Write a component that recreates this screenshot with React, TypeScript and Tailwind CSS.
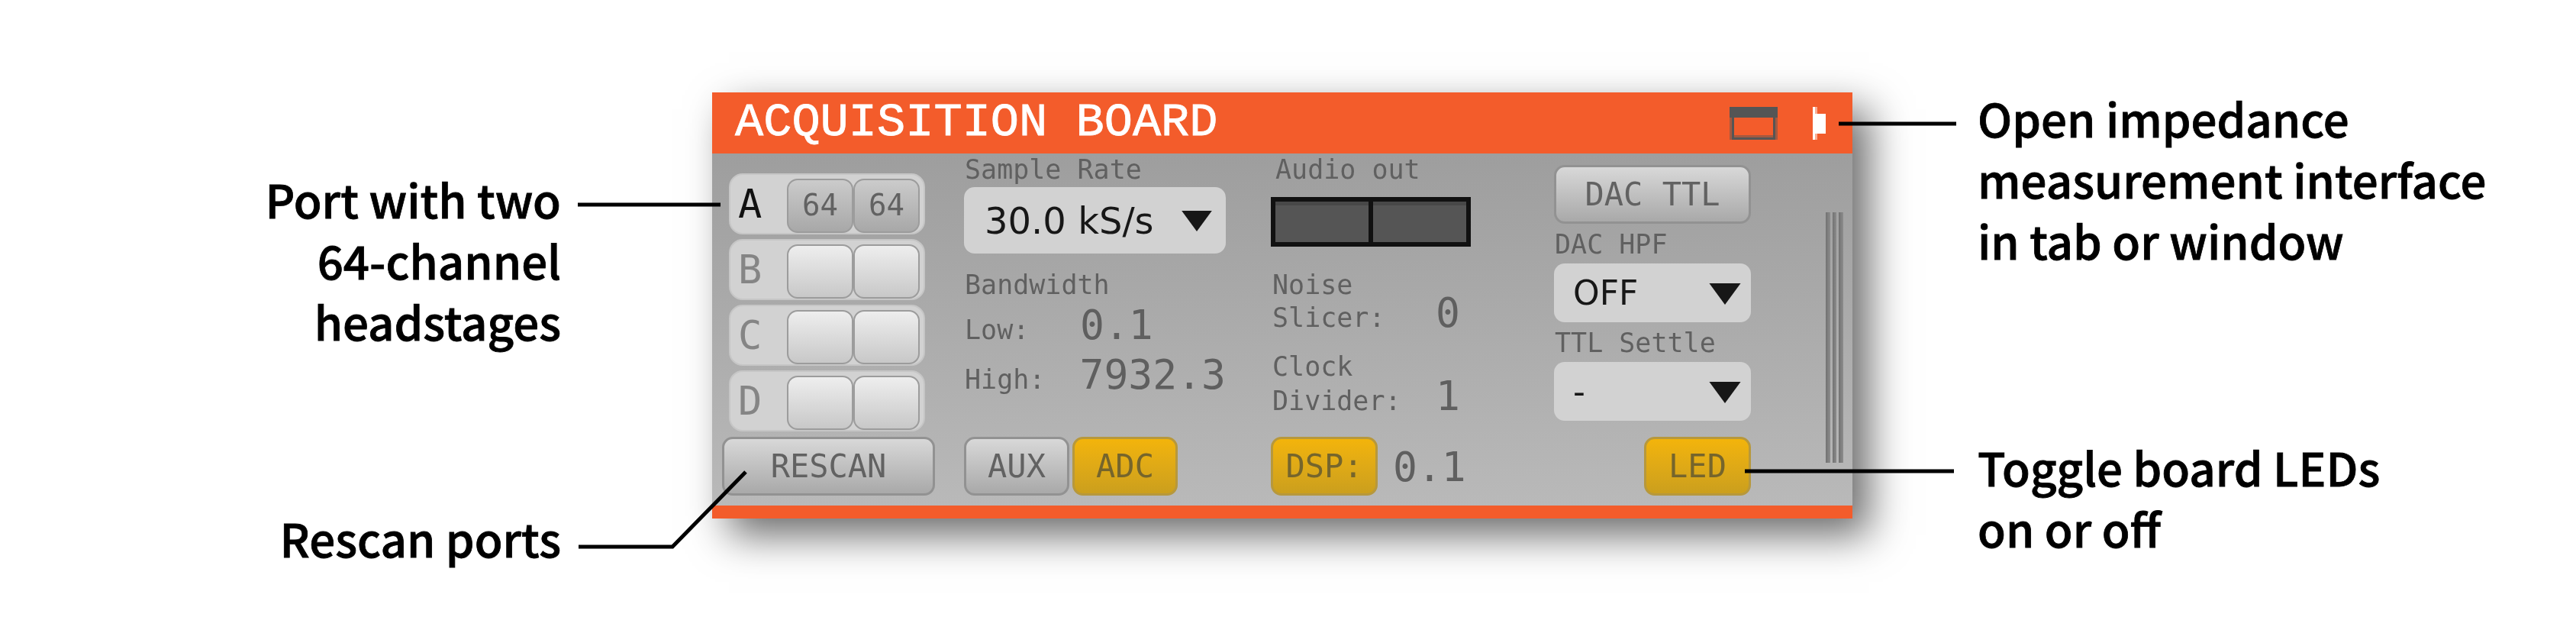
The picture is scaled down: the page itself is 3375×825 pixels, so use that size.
const mono = "font-['DejaVu_Sans_Mono',monospace]";

const Triangle = ({ className }: { className: string }) => (
  <svg viewBox="0 0 44 30" className={className}>
    <polygon points="0,0 44,0 22,30" fill="#171717" />
  </svg>
);

const Label = ({ children, className = "" }: { children: string; className?: string }) => (
  <div className={`${mono} text-[35px] leading-[35px] whitespace-pre text-[#606060] ${className}`}>{children}</div>
);

const Value = ({ children, className = "" }: { children: string; className?: string }) => (
  <span className={`${mono} text-[53px] whitespace-pre text-[#5f5f5f] ${className}`}>{children}</span>
);

const Button = ({ children, on = false, className = "" }: { children: string; on?: boolean; className?: string }) => (
  <div
    className={`${mono} flex items-center justify-center h-[77px] rounded-[14px] border-[3px] text-[42px] whitespace-pre ${
      on
        ? "border-[#b7983c] bg-gradient-to-b from-[#f3b40a] to-[#cb9f1d] text-[#75652c]"
        : "border-[#929292] bg-gradient-to-b from-[#d8d8d8] to-[#a9a9a9] text-[#626262]"
    } ${className}`}
  >
    {children}
  </div>
);

const Dropdown = ({ text, className, arrow }: { text: string; className: string; arrow: string }) => (
  <div className={`flex items-center justify-between rounded-[14px] bg-[#d2d2d2] ${className}`}>
    <span className="font-['DejaVu_Sans',sans-serif] text-[#171717] whitespace-pre">{text}</span>
    <Triangle className={arrow} />
  </div>
);

const HeadstageSlot = ({ text }: { text?: string }) => (
  <div
    className={`${mono} flex items-center justify-center w-[87px] h-[71px] rounded-[14px] border-[2px] border-[#9c9c9c] text-[39px] text-[#626262] ${
      text ? "bg-gradient-to-b from-[#cbcbcb] to-[#a8a8a8]" : "bg-gradient-to-b from-[#eeeeee] to-[#c8c8c8]"
    }`}
  >
    {text}
  </div>
);

const PortRow = ({ name, active = false }: { name: string; active?: boolean }) => (
  <div className="flex items-start w-[257px] h-[80px] pt-[5px] rounded-[18px] border-[2px] border-[#c6c6c6] bg-[#d2d2d2]">
    <div className={`${mono} w-[74px] pl-[10px] text-[52px] leading-[66px] ${active ? "text-[#111111]" : "text-[#858585]"}`}>
      {name}
    </div>
    <HeadstageSlot text={active ? "64" : undefined} />
    <HeadstageSlot text={active ? "64" : undefined} />
  </div>
);

const Note = ({ lines, className = "" }: { lines: string[]; className?: string }) => (
  <div className={`font-['Noto_Sans_CJK_SC',sans-serif] font-medium text-[60px] leading-[80px] [-webkit-text-stroke:0.8px_#000000] text-black whitespace-pre ${className}`}>
    {lines.map((l) => (
      <div key={l}>{l}</div>
    ))}
  </div>
);

const AcquisitionBoard = () => (
  <div className="flex flex-col w-[1494px] h-[558px] mt-[121px] shrink-0 bg-[#f35c2b] shadow-[22px_22px_50px_rgba(0,0,0,0.58)]">
    {/* title bar */}
    <div className="flex items-center h-[80px] pl-[30px] pr-[35px]">
      <span className="font-['Liberation_Mono',monospace] text-[62px] leading-none [-webkit-text-stroke:0.8px_#ffffff] text-white whitespace-pre">
        ACQUISITION BOARD
      </span>
      <svg viewBox="0 0 63 43" className="ml-auto w-[63px] h-[43px]">
        <rect width="63" height="14" fill="#555555" />
        <rect y="14" width="3" height="29" fill="#555555" opacity="0.5" />
        <rect x="60" y="14" width="3" height="29" fill="#555555" opacity="0.5" />
        <rect x="3" y="14" width="3" height="29" fill="#555555" />
        <rect x="57" y="14" width="3" height="29" fill="#555555" />
        <rect x="6" y="37" width="51" height="3" fill="#555555" opacity="0.5" />
        <rect x="3" y="40" width="57" height="3" fill="#555555" />
      </svg>
      <svg viewBox="0 0 17 43" className="ml-[46px] w-[17px] h-[43px]">
        <rect width="3" height="43" fill="#ffffff" />
        <rect x="3" width="3" height="43" fill="#ffffff" opacity="0.5" />
        <rect x="3" y="9" width="14" height="26" fill="#ffffff" />
      </svg>
    </div>

    {/* body, a little soft because the reference is an enlarged capture */}
    <div className="flex-1 bg-gradient-to-b from-[#9e9e9e] to-[#b9b9b9]">
      <div className="flex h-full pl-[13px] pb-[13px] blur-[0.6px]">
        <div className="flex flex-col w-[279px] pt-[26px]">
          <div className="flex flex-col gap-[6px] ml-[9px]">
            <PortRow name="A" active />
            <PortRow name="B" />
            <PortRow name="C" />
            <PortRow name="D" />
          </div>
          <Button className="mt-auto">RESCAN</Button>
        </div>

        <div className="flex flex-col w-[343px] ml-[38px] pt-[4px]">
          <Label className="pl-[1px]">Sample Rate</Label>
          <Dropdown
            text="30.0 kS/s"
            arrow="w-[40px] h-[27px] mt-[2px]"
            className="h-[87px] mt-[5px] pl-[27px] pr-[18px] text-[48px]"
          />
          <Label className="mt-[24px] pl-[1px]">Bandwidth</Label>
          <div className="flex items-baseline h-[50px] mt-[10px] pl-[1px]">
            <Label className="w-[151px]">Low:</Label>
            <Value className="leading-[50px]">0.1</Value>
          </div>
          <div className="flex items-baseline h-[50px] mt-[15px] pl-[1px]">
            <Label className="w-[151px]">High:</Label>
            <Value className="leading-[50px]">7932.3</Value>
          </div>
          <div className="flex gap-[4px] mt-auto">
            <Button className="w-[138px]">AUX</Button>
            <Button on className="w-[138px]">ADC</Button>
          </div>
        </div>

        <div className="flex flex-col w-[262px] ml-[59px] pt-[4px]">
          <Label className="pl-[6px]">Audio out</Label>
          <div className="flex h-[65px] mt-[18px] border-[6px] border-[#111111] bg-[#555555]">
            <div className="flex-1 border-t-[5px] border-[#484848]" />
            <div className="w-[6px] bg-[#111111]" />
            <div className="flex-1 border-t-[5px] border-[#484848]" />
          </div>
          <Label className="mt-[33px] pl-[2px]">Noise</Label>
          <div className="flex items-baseline mt-[1px] pl-[2px]">
            <Label className="w-[214px]">Slicer:</Label>
            <Value className="leading-[35px]">0</Value>
          </div>
          <Label className="mt-[29px] pl-[2px]">Clock</Label>
          <div className="flex items-baseline mt-[3px] pl-[2px]">
            <Label className="w-[214px]">Divider:</Label>
            <Value className="leading-[35px]">1</Value>
          </div>
          <div className="flex items-center mt-auto">
            <Button on className="w-[140px]">DSP:</Button>
            <Value className="ml-[20px] leading-[50px] mt-[3px]">0.1</Value>
          </div>
        </div>

        <div className="flex flex-col w-[258px] ml-[109px] pt-[15px]">
          <Button className="h-[76px]">DAC TTL</Button>
          <Label className="mt-[10px] pl-[1px]">DAC HPF</Label>
          <Dropdown
            text="OFF"
            arrow="w-[44px] h-[28px] mt-[2px]"
            className="h-[77px] mt-[7px] pl-[25px] pr-[12px] text-[44px]"
          />
          <Label className="mt-[10px] pl-[1px]">TTL Settle</Label>
          <Dropdown
            text="-"
            arrow="w-[44px] h-[28px] mt-[2px]"
            className="h-[77px] mt-[7px] pl-[25px] pr-[12px] text-[44px]"
          />
          <Button on className="w-[140px] mt-auto self-end">LED</Button>
        </div>

        <div className="flex gap-[3px] h-[328px] mt-[77px] ml-[98px]">
          <div className="w-[6px] bg-gradient-to-r from-[#727272] to-[#8c8c8c]" />
          <div className="w-[5px] bg-gradient-to-r from-[#727272] to-[#8c8c8c]" />
          <div className="w-[6px] bg-gradient-to-r from-[#727272] to-[#8c8c8c]" />
        </div>
      </div>
    </div>

    <div className="h-[17px]" />
  </div>
);

export default function App() {
  return (
    <div className="relative flex items-start w-[3375px] h-[825px] overflow-hidden bg-white">
      <div className="flex flex-col items-end w-[735px] pt-[220px] shrink-0">
        <Note lines={["Port with two", "64-channel", "headstages"]} className="text-right" />
        <Note lines={["Rescan ports"]} className="mt-[204px]" />
      </div>
      <div className="ml-[198px]">
        <AcquisitionBoard />
      </div>
      <div className="flex flex-col ml-[164px] pt-[114px]">
        <Note lines={["Open impedance", "measurement interface", "in tab or window"]} />
        <Note lines={["Toggle board LEDs", "on or off"]} className="mt-[217px]" />
      </div>

      {/* callout lines sit on top of the panel */}
      <svg className="absolute inset-0 w-[3375px] h-[825px] pointer-events-none" viewBox="0 0 3375 825">
        <g stroke="#000000" strokeWidth="5" fill="none">
          <path d="M757 268H944" />
          <path d="M758 716H881L977 618" />
          <path d="M2409 162H2563" />
          <path d="M2286 617H2560" />
        </g>
      </svg>
    </div>
  );
}
